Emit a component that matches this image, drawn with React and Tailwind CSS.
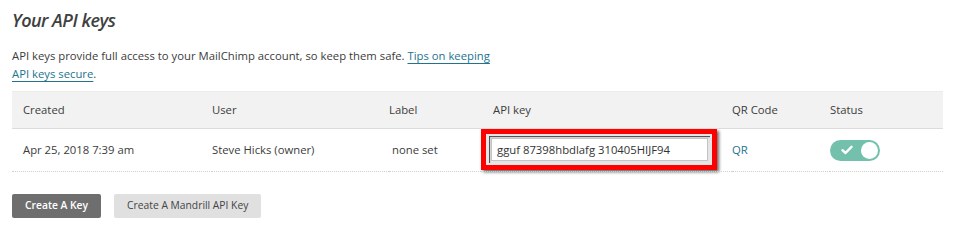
export default function App() {
  return (
    <div className="w-[967px] h-[249px] bg-white px-3 pt-[6px] text-[#3c3c3c] font-['Open_Sans',sans-serif]">
      <h2 className="text-[18px] italic font-semibold text-[#404040] leading-[28px] tracking-[-0.5px]">Your API keys</h2>
      <p className="mt-[13px] text-[11.3px] leading-[18px] w-[490px]">
        API keys provide full access to your MailChimp account, so keep them safe.{' '}
        <a href="#" className="text-[#23738f] underline underline-offset-[3px]">Tips on keeping</a>
        <br />
        <a href="#" className="text-[#23738f] underline underline-offset-[3px]">API keys secure</a>.
      </p>

      {/* Keys table */}
      <table className="mt-[8px] w-[931px] text-[11.3px] border-collapse">
        <thead>
          <tr className="bg-[#f2f2f2] border-t border-[#ececec] border-b border-b-[#dcdcdc] h-[37px] text-left">
            <th className="font-normal pl-[11px] w-[200px]">Created</th>
            <th className="font-normal w-[177px]">User</th>
            <th className="font-normal w-[92px]">Label</th>
            <th className="font-normal pl-[12px] w-[251px]">API key</th>
            <th className="font-normal w-[98px]">QR Code</th>
            <th className="font-normal">Status</th>
          </tr>
        </thead>
        <tbody>
          <tr className="h-[43px] border-b border-dotted border-[#cfcfcf]">
            <td className="pl-[11px]">Apr 25, 2018 7:39 am</td>
            <td>Steve Hicks (owner)</td>
            <td className="pl-[3px]">none set</td>
            <td className="align-top">
              <div className="w-[236px] h-[41px] border-[5px] border-[#ff0000] shadow-[2px_2px_3px_rgba(0,0,0,0.6)] bg-[#e6e6e6] p-[2px] pl-[3px]">
                <div className="h-full shadow-[inset_1px_1px_1px_rgba(0,0,0,0.7)] p-[2px] bg-[#e4e4e4]">
                  <input
                    readOnly
                    value="gguf 87398hbdlafg 310405HIJF94"
                    className="w-full h-full border border-[#c4c4c4] bg-white px-[5px] text-[11.3px] text-[#333] outline-none"
                  />
                </div>
              </div>
            </td>
            <td className="text-[#23738f]">QR</td>
            <td>
              <div className="w-[50px] h-[21px] rounded-full bg-[#73c1ac] flex items-center justify-between pl-[11px] pr-[2px]">
                <svg width="12" height="10" viewBox="0 0 12 10">
                  <path d="M1.5 5.2 L4.5 8 L10.5 1.8" stroke="white" strokeWidth="2.4" fill="none" strokeLinecap="round" strokeLinejoin="round" />
                </svg>
                <div className="w-[17px] h-[17px] rounded-full bg-white" />
              </div>
            </td>
          </tr>
        </tbody>
      </table>

      {/* Actions */}
      <div className="mt-[22px] flex gap-[13px]">
        <button className="h-[24px] px-[13px] rounded-[2px] bg-[#6e6e6e] text-white text-[10.3px] font-semibold">Create A Key</button>
        <button className="h-[24px] px-[13px] rounded-[2px] bg-[#e0e0e0] text-[#444] text-[10.3px]">Create A Mandrill API Key</button>
      </div>
    </div>
  );
}
